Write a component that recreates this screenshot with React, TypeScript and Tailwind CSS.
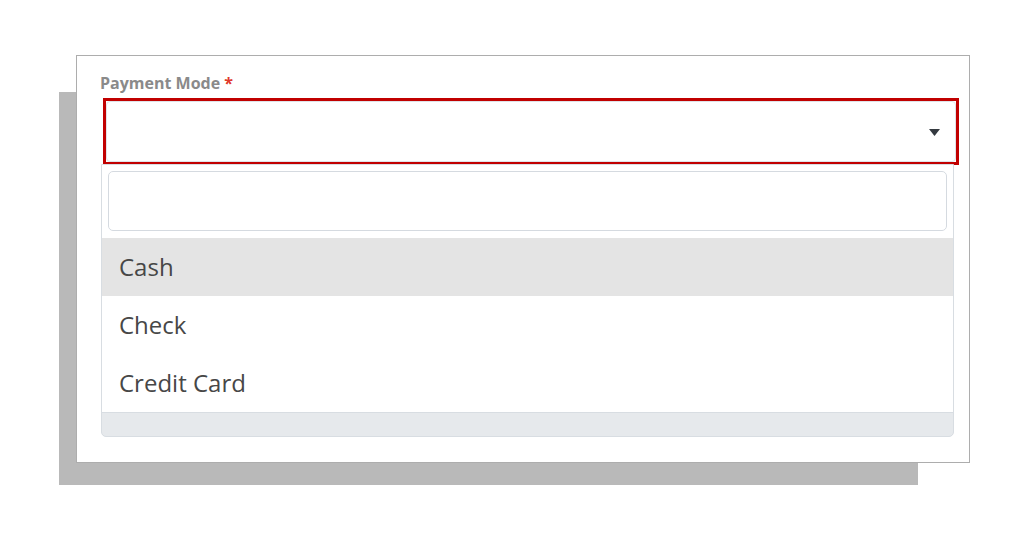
import React from "react";

const options = ["Cash", "Check", "Credit Card"];

const App = () => {
  return (
    <div
      className="relative w-[1024px] h-[543px] bg-white overflow-hidden pt-[55px] pl-[76px]"
      style={{ fontFamily: '"Open Sans", "Noto Sans", sans-serif' }}
    >
      {/* offset grey backdrop behind the card */}
      <div className="absolute left-[59px] top-[92px] w-[859px] h-[393px] bg-[#b9b9b9]" />

      <div className="relative w-[894px] h-[408px] bg-white border border-[#adadad] pt-[17px] pl-[24px] pr-[15px]">
        <label className="block -ml-px mb-[5px] text-[16px] leading-[20px] font-bold text-[#8a8a8a]">
          Payment Mode <span className="text-[#e0392b]">*</span>
        </label>

        {/* select control, highlighted */}
        <div className="ml-[2px] w-[856px] h-[67px] border-[3px] border-[#c10000] bg-white">
          <div className="flex h-full items-center justify-end rounded-[4px] border border-[#dfe3e8] pr-[15px]">
            <svg width="11" height="7" viewBox="0 0 11 7" className="mt-[2px]">
              <path d="M0 0h11L5.5 7z" fill="#343a40" />
            </svg>
          </div>
        </div>

        {/* dropdown */}
        <div className="-mt-px w-[853px] border border-[#d8dde2] rounded-b-[5px] bg-[#e6e9ec] overflow-hidden">
          <div className="bg-white border-b border-[#d8dde2]">
            <div className="px-[6px] pt-[6px] pb-[7px]">
              <div className="h-[60px] rounded-[5px] border border-[#d5dae0] bg-white" />
            </div>
            <ul>
              {options.map((o, i) => (
                <li
                  key={o}
                  className={`flex h-[58px] items-center pl-[17px] text-[24px] text-[#474747] ${
                    i === 0 ? "bg-[#e4e4e4]" : ""
                  }`}
                >
                  {o}
                </li>
              ))}
            </ul>
          </div>
          <div className="h-[23px]" />
        </div>
      </div>
    </div>
  );
};

export default App;
